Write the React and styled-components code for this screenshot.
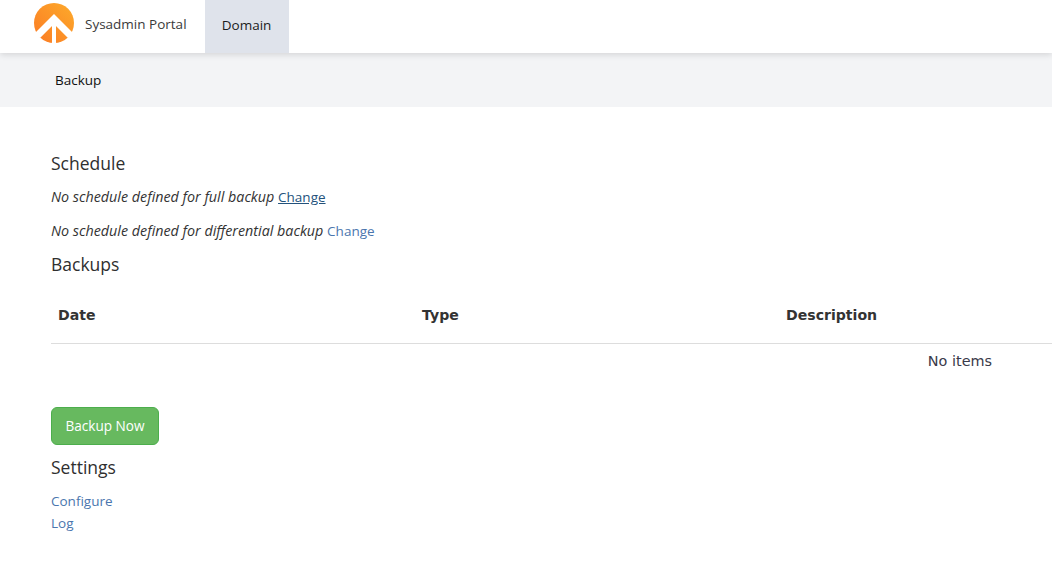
import React from "react";
import styled, { createGlobalStyle } from "styled-components";

const GlobalStyle = createGlobalStyle`
  html, body {
    margin: 0;
    padding: 0;
    background: #fff;
    overflow: hidden;
  }
  body {
    font-family: "Open Sans", "Noto Sans", sans-serif;
    color: #292929;
  }
`;

const Page = styled.div`
  width: 1052px;
  height: 582px;
  overflow: hidden;
`;

const TopBar = styled.header`
  position: relative;
  z-index: 1;
  display: flex;
  height: 53px;
  padding-left: 34px;
  background: #fff;
  box-shadow: 0 2px 6px rgba(0, 0, 0, 0.12);
`;

const Brand = styled.div`
  display: flex;
  align-items: center;
  gap: 11px;
  height: 48px;
  padding-right: 18px;
  font-size: 13.5px;
  color: #3a3a3a;
`;

const NavTab = styled.div`
  display: flex;
  align-items: center;
  justify-content: center;
  width: 84px;
  padding-bottom: 3px;
  background: #dfe3eb;
  font-size: 13.5px;
  color: #1c1c1c;
`;

const SubBar = styled.nav`
  display: flex;
  align-items: center;
  height: 54px;
  padding-left: 55px;
  background: #f3f4f6;
  font-size: 13.5px;
  color: #111;
`;

const Content = styled.main`
  padding: 44px 0 0 51px;
`;

const Heading = styled.h2`
  margin: ${(p) => p.$top || 0}px 0 0;
  font-size: 17.5px;
  font-weight: 400;
  line-height: 24px;
  color: #2f2f2f;
`;

const Note = styled.p`
  margin: ${(p) => p.$top}px 0 0;
  font-size: 14.3px;
  line-height: 20px;
  font-style: italic;
  color: #333;
`;

const Link = styled.a`
  font-size: 13.5px;
  font-style: normal;
  color: ${(p) => (p.$active ? "#23527c" : "#4a76ae")};
  text-decoration: ${(p) => (p.$active ? "underline" : "none")};
`;

const TableWrap = styled.div`
  margin-top: 7px;
  width: 1092px;
`;

const HeadRow = styled.div`
  box-sizing: border-box;
  display: grid;
  grid-template-columns: repeat(3, 364px);
  height: 61px;
  padding-top: 3px;
  align-items: center;
  border-bottom: 1px solid #ddd;
`;

const HeadCell = styled.div`
  padding-left: 7px;
  font-family: "DejaVu Sans", Verdana, sans-serif;
  font-size: 14.1px;
  font-weight: 700;
  color: #333;
`;

const EmptyRow = styled.div`
  width: 941px;
  height: 34px;
  line-height: 34px;
  text-align: right;
  font-family: "DejaVu Sans", Verdana, sans-serif;
  font-size: 14.4px;
  color: #3a3a4a;
`;

const GreenButton = styled.button`
  display: block;
  box-sizing: border-box;
  width: 108px;
  height: 38px;
  margin-top: 29px;
  padding: 0 0 2px;
  border: 1px solid #4cae4c;
  border-radius: 6px;
  background: #67b95f;
  font-family: inherit;
  font-size: 13.6px;
  color: #fff;
`;

const LinkList = styled.div`
  display: flex;
  flex-direction: column;
  margin-top: 11px;
  line-height: 22px;
`;

const Logo = () => (
  <svg width="40" height="42" viewBox="0 0 40 42">
    <defs>
      <linearGradient id="logoFill" x1="0" y1="1" x2="1" y2="0">
        <stop offset="0" stopColor="#fb7a24" />
        <stop offset="1" stopColor="#fdab2b" />
      </linearGradient>
    </defs>
    <circle cx="20" cy="20" r="20" fill="url(#logoFill)" />
    <path d="M20 11 L39 30 L34 35 L20 21 L6 35 L1 30 Z" fill="#fff" />
    <rect x="18" y="20" width="4" height="22" fill="#fff" />
  </svg>
);

export default function App() {
  return (
    <Page>
      <GlobalStyle />
      <TopBar>
        <Brand>
          <Logo />
          Sysadmin Portal
        </Brand>
        <NavTab>Domain</NavTab>
      </TopBar>
      <SubBar>Backup</SubBar>
      <Content>
        <Heading>Schedule</Heading>
        <Note $top={12}>
          No schedule defined for full backup <Link $active>Change</Link>
        </Note>
        <Note $top={14}>
          No schedule defined for differential backup <Link>Change</Link>
        </Note>
        <Heading $top={11}>Backups</Heading>
        <TableWrap>
          <HeadRow>
            <HeadCell>Date</HeadCell>
            <HeadCell>Type</HeadCell>
            <HeadCell>Description</HeadCell>
          </HeadRow>
          <EmptyRow>No items</EmptyRow>
        </TableWrap>
        <GreenButton>Backup Now</GreenButton>
        <Heading $top={10}>Settings</Heading>
        <LinkList>
          <Link>Configure</Link>
          <Link>Log</Link>
        </LinkList>
      </Content>
    </Page>
  );
}
